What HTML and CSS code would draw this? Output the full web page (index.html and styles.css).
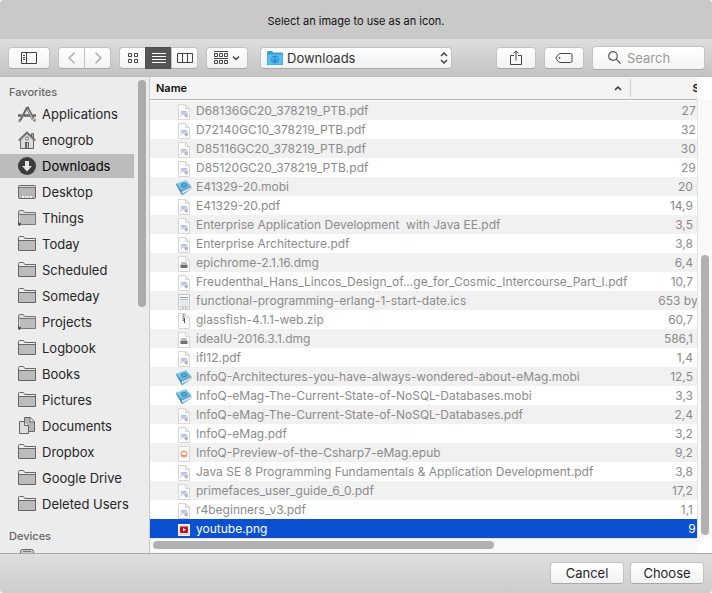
FILE: index.html
```html
<!DOCTYPE html>
<html lang="en">
<head>
<meta charset="utf-8">
<title>Select an image</title>
<link rel="stylesheet" href="styles.css">
</head>
<body>
<svg class="sprite" aria-hidden="true">
  <defs>
    <linearGradient id="bookblue" x1="0" y1="0" x2="1" y2="1"><stop offset="0" stop-color="#7fdcf0"/><stop offset="1" stop-color="#5a9fd8"/></linearGradient>
  </defs>
  <symbol id="folder" viewBox="0 0 18 16">
    <path d="M.5 14.500V1.500q0-1 1-1h3.500q.7 0 1.200 1l.6 1h10.700v12z" fill="#ededed" stroke="#656565"/>
    <path d="M1 5h16v9H1z" fill="#bcbcbc"/><path d="M1 4.500h16" stroke="#656565"/>
  </symbol>
  <symbol id="smart" viewBox="0 0 18 16">
    <path d="M.5 14.500V1.500q0-1 1-1h3.500q.7 0 1.200 1l.6 1h10.700v12z" fill="#d8d8d8" stroke="#777"/>
    <path d="M2 5h15v9H2z" fill="#bcbcbc"/><path d="M1 4.500h16" stroke="#777"/><path d="M0 12.500l3 .5v2l-2 1-1-1z" fill="#555"/>
  </symbol>
  <symbol id="apps" viewBox="0 0 18 16">
    <g fill="none" stroke="#656565"><path d="M2.500 14L9 1.500" stroke-width="2"/><path d="M9 1l6 12" stroke-width="3"/><path d="M9.500 3l5 10" stroke="#d5d5d5"/><path d="M0 9.500h3.500M6 9.500h6M14.500 9.500H18" stroke-width="2.500"/><path d="M1.500 13l-.5 3 2.500-2M14.500 13.500l2.500 2v-3"/></g>
  </symbol>
  <symbol id="home" viewBox="0 0 18 18">
    <path d="M2.500 9v8.500h13V9L9 2.500z" fill="#dcdcdc" stroke="#656565"/><path d="M13.500 6V2.500h2V8" fill="#aaa" stroke="#656565"/><path d="M.5 9.500L9 1.200l8.500 8.300" fill="none" stroke="#656565" stroke-width="1.500"/><path d="M7 11h4v6.500H7z" fill="#656565"/><circle cx="9" cy="7.500" r="1.500" fill="#fff" stroke="#656565"/><path d="M9 12h1v5H9z" fill="#ccc"/>
  </symbol>
  <symbol id="down" viewBox="0 0 18 18"><circle cx="9" cy="9" r="9" fill="#3c3c3c"/><path d="M7 4h4v5h3l-5 5.500L4 9h3z" fill="#e4e4e4"/></symbol>
  <symbol id="desk" viewBox="0 0 18 14"><rect x=".5" y=".5" width="17" height="13" rx="1" fill="#b6b6b6" stroke="#656565"/><path d="M1 1.500h16" stroke="#ddd"/><path d="M1 2.500h16" stroke="#777"/><path d="M4 11h10v2H4z" fill="#f2f2f2"/><path d="M6.500 11v2M9 11v2M11.500 11v2" stroke="#999" stroke-width=".7"/></symbol>
  <symbol id="docs" viewBox="0 0 18 18"><path d="M6.500.5h6l4 4v10h-10z" fill="#b5b5b5" stroke="#656565"/><path d="M12 .5v4.500h4.500" fill="#eee" stroke="#656565"/><path d="M1.500 4.500h5l4 4v8h-9z" fill="#dcdcdc" stroke="#656565"/><path d="M6.500 4.500v4h4" fill="#eee" stroke="#656565"/></symbol>
  <symbol id="disk" viewBox="0 0 18 18"><rect x="2.500" y=".5" width="13" height="16" rx="2" fill="#c9c9c9" stroke="#656565"/><path d="M5 2.500h8" stroke="#777"/></symbol>

  <symbol id="pdf" viewBox="0 0 16 16"><path d="M2.500.5h7l4 4v11h-11z" fill="#fcfcfc" stroke="#d6d6d6"/><path d="M9.500.5v4h4z" fill="#f1f1f1" stroke="#d6d6d6"/><path d="M4.500 10V8.200l2-1h4l1.500 2V11z" fill="#ccd7ee"/><path d="M5 7.800h5.500" stroke="#9fb3dc"/><path d="M4.500 12l3-2.500 1.500 2" fill="none" stroke="#bbb"/><circle cx="10.300" cy="11.700" r="1.700" fill="#b4b6ba"/></symbol>
  <symbol id="mobi" viewBox="0 0 16 16"><path d="M0 4.500l.7-1 5.300 6.500 9.300-3.500v2.500L6 15.300z" fill="#3d84bf"/><path d="M5.800 11.500l9.200-4.200v2L6 14z" fill="#dfe7f0"/><path d="M.3 3.500L10 .3 15.300 6.500 5.500 11z" fill="url(#bookblue)"/><ellipse cx="8" cy="5.300" rx="2.800" ry="2.200" fill="#4387b0"/><path d="M6.500 5.500l1.300-1.200 1.500 1M8 4.500v2" fill="none" stroke="#9ad8ea" stroke-width=".7"/></symbol>
  <symbol id="dmg" viewBox="0 0 16 16"><path d="M2.500.5h7l4 4v11h-11z" fill="#fcfcfc" stroke="#d6d6d6"/><path d="M9.500.5v4h4" fill="none" stroke="#d6d6d6"/><path d="M5.500 6h5l1 3.500h-7z" fill="#bbb"/><path d="M4.500 9h7v3h-7z" fill="#707070"/></symbol>
  <symbol id="ics" viewBox="0 0 16 16"><path d="M2.500.5h11v12h-11z" fill="#f9f9f9" stroke="#c6c6c6"/><path d="M4 3.500h8" stroke="#999"/><path d="M4 5.500h8" stroke="#aabce6"/><path d="M4.500 6v5h7V6M7 6v5M9.500 6v5M5 8.500h6" fill="none" stroke="#ddd"/><path d="M2.500 12.500h11v3h-11z" fill="#eee" stroke="#ccc"/><path d="M6 14h1.500M9 14h1.500" stroke="#888"/></symbol>
  <symbol id="zip" viewBox="0 0 16 16"><path d="M2.500.5h7l4 4v11h-11z" fill="#fcfcfc" stroke="#d6d6d6"/><path d="M9.500.5v4h4" fill="none" stroke="#d6d6d6"/><path d="M7.500 1v7" stroke="#888" stroke-width="2" stroke-dasharray="1.500 .5"/><path d="M8.500 5v5" stroke="#555"/></symbol>
  <symbol id="epub" viewBox="0 0 16 16"><path d="M2.500.5h11v15h-11z" fill="#fcfcfc" stroke="#d6d6d6"/><circle cx="8" cy="8" r="3.500" fill="#ef9a70"/><path d="M5.800 6.300h4.400v2q-2.200 1.400-4.400 0z" fill="#fff"/><path d="M8 6v3" stroke="#f3b394" stroke-width=".8"/></symbol>
  <symbol id="png" viewBox="0 0 16 16"><path d="M2 2h12v12H2z" fill="#f5f5f5"/><path d="M3 3h10v10H3z" fill="#dfdfdf"/><rect x="4" y="4.500" width="8" height="6.500" rx="1" fill="#c80f1d"/><path d="M7 6l3 1.700L7 9.500z" fill="#fff"/></symbol>
</svg>

<div class="window">
  <header class="titlebar">Select an image to use as an icon.</header>

  <div class="toolbar">
    <button class="btn wide" aria-label="Toggle sidebar"><svg width="16" height="12" viewBox="0 0 16 12" fill="none" stroke="#444"><path d="M.5.5h15v11H.5zM5.500.5v11M2 3.500h2M2 5.500h2M2 7.500h2"/></svg></button>
    <div class="group nav">
      <button class="btn" aria-label="Back"><svg width="8" height="12" viewBox="0 0 8 12" fill="none" stroke="#aaa" stroke-width="1.500"><path d="M6.500.7L1 6l5.500 5.300"/></svg></button>
      <button class="btn" aria-label="Forward"><svg width="8" height="12" viewBox="0 0 8 12" fill="none" stroke="#aaa" stroke-width="1.500"><path d="M1.500.7L7 6l-5.500 5.300"/></svg></button>
    </div>
    <div class="group">
      <button class="btn" aria-label="Icon view"><svg width="10" height="10" viewBox="0 0 10 10" fill="none" stroke="#444"><path d="M.5.5h3v3h-3zM6.500.5h3v3h-3zM.5 6.500h3v3h-3zM6.500 6.500h3v3h-3z"/></svg></button>
      <button class="btn active" aria-label="List view" aria-pressed="true"><svg width="14" height="10" viewBox="0 0 14 10" stroke="#fff"><path d="M0 .5h14M0 3.500h14M0 6.500h14M0 9.500h14"/></svg></button>
      <button class="btn" aria-label="Column view"><svg width="16" height="10" viewBox="0 0 16 10" fill="none" stroke="#444"><path d="M.5.5h15v9H.5zM5.500.5v9M10.500.5v9"/></svg></button>
    </div>
    <button class="btn wide" aria-label="Arrange by"><svg width="26" height="14" viewBox="0 0 26 14" fill="none" stroke="#444"><path d="M0 .5h14M0 7.500h14M.5 2.500h3v3h-3zM5.500 2.500h3v3h-3zM10.500 2.500h3v3h-3zM.5 9.500h3v3h-3zM5.500 9.500h3v3h-3zM10.500 9.500h3v3h-3z"/><path d="M19 5.500l3 3 3-3" stroke-width="1.500"/></svg></button>
    <div class="location">
      <svg class="loc-icon" width="16" height="14" viewBox="0 0 16 14"><path d="M0 1q0-1 1-1h4l1.500 1.500H15q1 0 1 1V14H0z" fill="#3e9fd6"/><path d="M.5 3.500h15v10H.5z" fill="#5cbcf0"/><circle cx="8" cy="8.500" r="3.500" fill="none" stroke="#2689cb"/><path d="M8 5v5M6 8.500l2 2 2-2" fill="none" stroke="#2689cb" stroke-width="1.300"/></svg>
      <select aria-label="Location"><option>Downloads</option></select>
      <svg class="loc-arrows" width="8" height="12" viewBox="0 0 8 12" fill="none" stroke="#444" stroke-width="1.500"><path d="M1 4l3-3 3 3M1 8l3 3 3-3"/></svg>
    </div>
    <button class="btn mid share" aria-label="Share"><svg width="12" height="16" viewBox="0 0 12 16" fill="none" stroke="#444"><path d="M4 5.500H.5v9h11v-9H8M6 10.500V1.500M3.500 3.500L6 1l2.500 2.500"/></svg></button>
    <button class="btn mid" aria-label="Edit tags"><svg width="18" height="10" viewBox="0 0 18 10" fill="none" stroke="#444"><path d="M5 .5h10.500q1.500 0 1.500 1.500v6q0 1.500-1.500 1.500H5Q3.500 9.500.8 5 3.500.5 5 .5z"/><circle cx="4.500" cy="5" r=".6"/></svg></button>
    <label class="search">
      <svg width="13" height="13" viewBox="0 0 13 13" fill="none" stroke="#555" stroke-width="1.200"><circle cx="5" cy="5" r="4.300"/><path d="M8.200 8.200l4.300 4.300"/></svg>
      <input type="search" placeholder="Search" aria-label="Search">
    </label>
  </div>

  <main class="content">
    <nav class="sidebar" aria-label="Places">
      <h2>Favorites</h2>
      <ul>
        <li><svg><use href="#apps"/></svg>Applications</li>
        <li><svg class="tall"><use href="#home"/></svg>enogrob</li>
        <li class="current"><svg class="tall"><use href="#down"/></svg>Downloads</li>
        <li><svg><use href="#desk"/></svg>Desktop</li>
        <li><svg><use href="#smart"/></svg>Things</li>
        <li><svg><use href="#folder"/></svg>Today</li>
        <li><svg><use href="#folder"/></svg>Scheduled</li>
        <li><svg><use href="#folder"/></svg>Someday</li>
        <li><svg><use href="#smart"/></svg>Projects</li>
        <li><svg><use href="#folder"/></svg>Logbook</li>
        <li><svg><use href="#folder"/></svg>Books</li>
        <li><svg><use href="#folder"/></svg>Pictures</li>
        <li><svg class="tall"><use href="#docs"/></svg>Documents</li>
        <li><svg><use href="#folder"/></svg>Dropbox</li>
        <li><svg><use href="#folder"/></svg>Google Drive</li>
        <li><svg><use href="#folder"/></svg>Deleted Users</li>
      </ul>
      <h2>Devices</h2>
      <ul><li><svg class="tall"><use href="#disk"/></svg></li></ul>
      <span class="side-thumb"></span>
    </nav>

    <section class="browser">
      <div class="files">
        <table>
          <colgroup><col><col class="size-col"></colgroup>
          <thead><tr><th><div class="sort">Name<svg width="8" height="6" viewBox="0 0 8 6" fill="none" stroke="#333" stroke-width="1.500"><path d="M1 5l3-3 3 3"/></svg></div></th><th class="size">Size</th></tr></thead>
          <tbody>
            <tr><td><svg><use href="#pdf"/></svg>D68136GC20_378219_PTB.pdf</td><td>27 KB</td></tr>
            <tr><td><svg><use href="#pdf"/></svg>D72140GC10_378219_PTB.pdf</td><td>32 KB</td></tr>
            <tr><td><svg><use href="#pdf"/></svg>D85116GC20_378219_PTB.pdf</td><td>30 KB</td></tr>
            <tr><td><svg><use href="#pdf"/></svg>D85120GC20_378219_PTB.pdf</td><td>29 KB</td></tr>
            <tr><td><svg><use href="#mobi"/></svg>E41329-20.mobi</td><td>20 MB</td></tr>
            <tr><td><svg><use href="#pdf"/></svg>E41329-20.pdf</td><td>14,9 MB</td></tr>
            <tr><td><svg><use href="#pdf"/></svg>Enterprise Application Development&nbsp; with Java EE.pdf</td><td>3,5 MB</td></tr>
            <tr><td><svg><use href="#pdf"/></svg>Enterprise Architecture.pdf</td><td>3,8 MB</td></tr>
            <tr><td><svg><use href="#dmg"/></svg>epichrome-2.1.16.dmg</td><td>6,4 MB</td></tr>
            <tr><td><svg><use href="#pdf"/></svg>Freudenthal_Hans_Lincos_Design_of...ge_for_Cosmic_Intercourse_Part_I.pdf</td><td>10,7 MB</td></tr>
            <tr><td><svg><use href="#ics"/></svg>functional-programming-erlang-1-start-date.ics</td><td>653 bytes</td></tr>
            <tr><td><svg><use href="#zip"/></svg>glassfish-4.1.1-web.zip</td><td>60,7 MB</td></tr>
            <tr><td><svg><use href="#dmg"/></svg>ideaIU-2016.3.1.dmg</td><td>586,1 MB</td></tr>
            <tr><td><svg><use href="#pdf"/></svg>ifl12.pdf</td><td>1,4 MB</td></tr>
            <tr><td><svg><use href="#mobi"/></svg>InfoQ-Architectures-you-have-always-wondered-about-eMag.mobi</td><td>12,5 MB</td></tr>
            <tr><td><svg><use href="#mobi"/></svg>InfoQ-eMag-The-Current-State-of-NoSQL-Databases.mobi</td><td>3,3 MB</td></tr>
            <tr><td><svg><use href="#pdf"/></svg>InfoQ-eMag-The-Current-State-of-NoSQL-Databases.pdf</td><td>2,4 MB</td></tr>
            <tr><td><svg><use href="#pdf"/></svg>InfoQ-eMag.pdf</td><td>3,2 MB</td></tr>
            <tr><td><svg><use href="#epub"/></svg>InfoQ-Preview-of-the-Csharp7-eMag.epub</td><td>9,2 MB</td></tr>
            <tr><td><svg><use href="#pdf"/></svg>Java SE 8 Programming Fundamentals &amp; Application Development.pdf</td><td>3,8 MB</td></tr>
            <tr><td><svg><use href="#pdf"/></svg>primefaces_user_guide_6_0.pdf</td><td>17,2 MB</td></tr>
            <tr><td><svg><use href="#pdf"/></svg>r4beginners_v3.pdf</td><td>1,1 MB</td></tr>
            <tr class="selected"><td><svg><use href="#png"/></svg>youtube.png</td><td>9 KB</td></tr>
          </tbody>
        </table>
      </div>
      <div class="vbar"><span></span></div>
      <div class="hbar"><span></span></div>
    </section>
  </main>

  <footer class="footer">
    <button class="btn">Cancel</button>
    <button class="btn">Choose</button>
  </footer>
</div>
</body>
</html>
```
FILE: styles.css
```css
* { box-sizing: border-box; }
body {
  margin: 0;
  background: #fff;
  color: #262626;
  font: 13px/16px Inter, "Liberation Sans", sans-serif;
}
.sprite { position: absolute; width: 0; height: 0; }
.window {
  display: flex;
  flex-direction: column;
  height: 100vh;
  overflow: hidden;
  border-radius: 4px;
  background: #ececec;
}
.titlebar {
  flex: none;
  height: 39px;
  padding-top: 4px;
  background: #c9c9c9;
  color: #111;
  font-size: 11px;
  line-height: 35px;
  text-align: center;
}
.toolbar {
  flex: none;
  display: flex;
  align-items: center;
  gap: 8px;
  height: 38px;
  padding: 0 7px 0 8px;
  background: linear-gradient(#dedede, #c3c3c3);
  border-bottom: 1px solid #bdbdbd;
}
.btn {
  display: flex;
  align-items: center;
  justify-content: center;
  height: 22px;
  padding: 0;
  border: 1px solid #c2c2c2;
  border-bottom-color: #a9a9a9;
  border-radius: 4px;
  background: linear-gradient(#fff, #f2f2f2);
  color: #262626;
  font: inherit;
}
.wide { width: 42px; }
.mid { width: 40px; }
.group { display: flex; }
.group .btn { width: 27px; border-radius: 0; }
.group .btn + .btn { margin-left: -1px; }
.group .btn:first-child { border-radius: 4px 0 0 4px; }
.group .btn:last-child { border-radius: 0 4px 4px 0; }
.group .active { background: #555; border-color: #505050; }
.location {
  display: flex;
  position: relative;
  flex: 0 1 192px;
  margin: 0 auto 0 4px;
}
.location select {
  appearance: none;
  width: 100%;
  height: 22px;
  padding: 0 20px 0 26px;
  border: 1px solid #c2c2c2;
  border-bottom-color: #a9a9a9;
  border-radius: 4px;
  background: linear-gradient(#fff, #f0f0f0);
  color: #333;
  font: inherit;
}
.loc-icon, .loc-arrows { position: absolute; top: 4px; pointer-events: none; }
.loc-icon { left: 7px; }
.loc-arrows { top: 5px; right: 4px; }
.search {
  display: flex;
  align-items: center;
  gap: 6px;
  width: 113px;
  height: 24px;
  padding-left: 15px;
  border: 1px solid #c2c2c2;
  border-bottom-color: #a9a9a9;
  border-radius: 4px;
  background: linear-gradient(#fff, #f4f4f4);
}
.search svg { flex: none; }
.search input {
  width: 100%;
  min-width: 0;
  padding: 0;
  border: 0;
  outline: 0;
  background: none;
  font: inherit;
}
.search input::placeholder { color: #9a9a9a; opacity: 1; }

.content { display: flex; flex: 1; min-height: 0; }
.sidebar {
  position: relative;
  flex: none;
  width: 150px;
  overflow: hidden;
  border-right: 1px solid #c8c8c8;
}
.sidebar h2 {
  margin: 0;
  padding: 7px 9px 2px;
  color: #666;
  font-size: 11px;
  font-weight: 500;
  line-height: 16px;
}
.sidebar ul { margin: 0 15px 5px 0; padding: 0; list-style: none; }
.sidebar li {
  display: flex;
  align-items: center;
  gap: 6px;
  height: 24px;
  margin-bottom: 2px;
  padding-left: 18px;
  white-space: nowrap;
}
.sidebar li svg { width: 18px; height: 16px; }
.sidebar li .tall { height: 18px; }
.sidebar .current { background: #bcbcbc; color: #000; }
.side-thumb {
  position: absolute;
  top: 3px;
  right: 3px;
  width: 8px;
  height: 227px;
  border-radius: 4px;
  background: #ababab;
}

.browser {
  display: grid;
  flex: 1;
  grid-template-columns: 1fr 15px;
  grid-template-rows: 1fr 15px;
  min-width: 0;
  background: #fff;
}
.files { min-width: 0; min-height: 0; overflow: hidden; }
.files table {
  width: calc(100% + 22px);
  table-layout: fixed;
  border-collapse: separate;
  border-spacing: 0;
  font-size: 12px;
}
.size-col { width: 88px; }
th {
  height: 23px;
  padding: 0 6px;
  border-bottom: 1px solid #b5b5b5;
  background: #f4f4f4;
  color: #111;
  font-size: 11px;
  font-weight: 600;
  text-align: left;
}
th:first-child { padding-right: 0; }
th.size { padding-right: 4px; text-align: right; }
.sort {
  display: flex;
  align-items: center;
  justify-content: space-between;
  height: 18px;
  padding-right: 8px;
  border-right: 1px solid #cfcfcf;
}
tbody::before { content: ""; display: table-row; height: 1px; }
td {
  height: 19px;
  padding: 0 4px;
  overflow: hidden;
  color: #8b8b8b;
  line-height: 19px;
  text-align: right;
  white-space: nowrap;
}
td:first-child { padding: 0 0 0 26px; text-align: left; }
td svg { width: 16px; height: 16px; margin-right: 4px; vertical-align: middle; }
tbody tr:nth-child(odd) { background: #f1f1f1; }
tbody tr.selected { background: #0a50d0; }
.selected td { color: #fff; }
.vbar {
  display: flex;
  margin-top: 23px;
  padding: 0 3px 3px;
  border-left: 1px solid #e4e4e4;
  background: #f9f9f9;
}
.vbar span {
  align-self: flex-end;
  width: 8px;
  height: 280px;
  border-radius: 4px;
  background: #b1b1b1;
}
.hbar { padding: 2px 3px; border-top: 1px solid #e4e4e4; background: #f9f9f9; }
.hbar span {
  display: block;
  width: 63%;
  height: 8px;
  border-radius: 4px;
  background: #b1b1b1;
}
.footer {
  flex: none;
  display: flex;
  align-items: center;
  justify-content: flex-end;
  gap: 6px;
  height: 40px;
  padding: 0 8px 2px 0;
  border-top: 1px solid #a9a9a9;
  background: linear-gradient(#dedede, #cdcdcd);
}
.footer .btn { width: 74px; }
```
